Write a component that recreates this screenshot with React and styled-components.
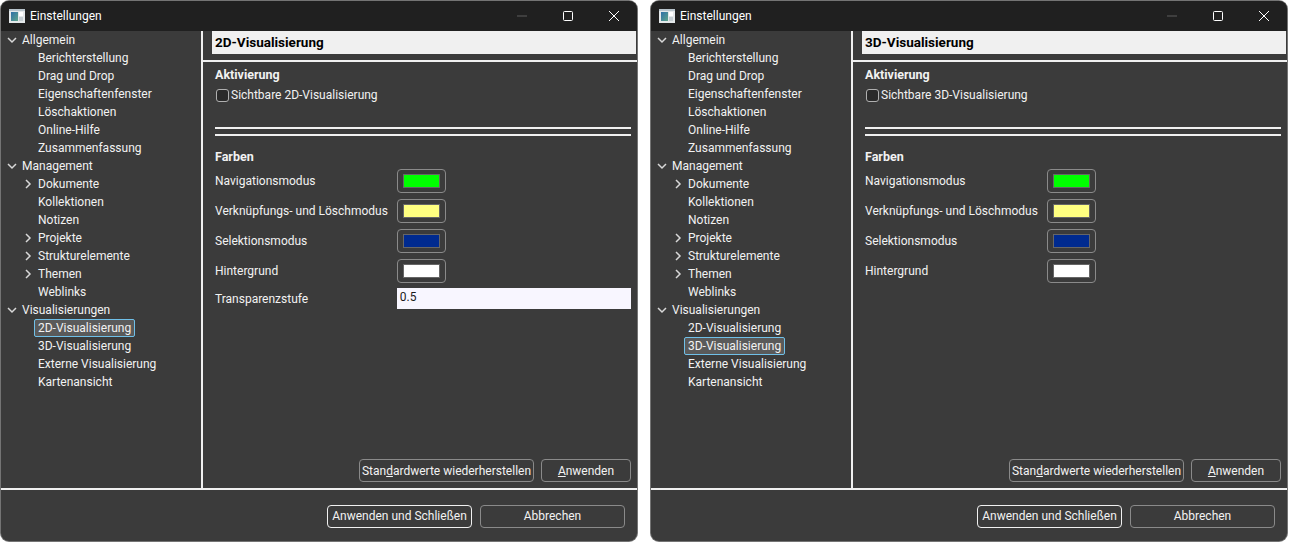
import React from "react";
import styled, { createGlobalStyle } from "styled-components";

const Global = createGlobalStyle`
  html, body {
    margin: 0;
    padding: 0;
    background: #fff;
  }
  body {
    font-family: "Roboto", "Noto Sans", sans-serif;
    font-size: 12px;
    color: #f2f2f2;
  }
`;

const Desktop = styled.div`
  display: flex;
  gap: 14px;
  padding: 1px 0 0 1px;
  width: 1300px;
  height: 542px;
  box-sizing: border-box;
  overflow: hidden;
`;

const Win = styled.div`
  width: 636px;
  height: 540px;
  display: flex;
  flex-direction: column;
  background: #3b3b3b;
  border-radius: 8px;
  overflow: hidden;
  box-shadow: 0 0 0 1px rgba(70, 70, 70, 0.75);
`;

const TitleBar = styled.div`
  height: 30px;
  box-sizing: border-box;
  flex: none;
  display: flex;
  align-items: center;
  background: #202020;
  padding: 0 0 1px 8px;
`;

const AppIcon = styled.svg`
  width: 16px;
  height: 14px;
  flex: none;
  margin-right: 5px;
`;

const TitleText = styled.span`
  flex: 1;
  color: #fff;
`;

const CaptionBtn = styled.div`
  width: 46px;
  height: 29px;
  display: flex;
  align-items: center;
  justify-content: center;
`;

const Body = styled.div`
  height: 457px;
  flex: none;
  display: flex;
  border-bottom: 2px solid #f0f0f0;
`;

const Nav = styled.div`
  width: 200px;
  flex: none;
  border-right: 2px solid #f0f0f0;
`;

const TreeRow = styled.div`
  height: 18px;
  display: flex;
  align-items: center;
  padding-left: ${(p) => (p.$depth ? 36 : 20)}px;
  position: relative;
  white-space: nowrap;
`;

const TreeLabel = styled.span`
  padding: 0 3px;
  margin-left: -3px;
  height: 16px;
  line-height: 15px;
  box-sizing: border-box;
  border: 1px solid transparent;
  border-radius: 2px;
  ${(p) =>
    p.$selected &&
    `
    background: #5a5a5a;
    border-color: #70c0e8;
    height: 18px;
    line-height: 16px;
  `}
`;

const Arrow = styled.svg`
  position: absolute;
  left: ${(p) => (p.$depth ? 22 : 6)}px;
  top: 4px;
  width: 10px;
  height: 10px;
`;

const Panel = styled.div`
  flex: 1;
  min-width: 0;
  display: flex;
  flex-direction: column;
`;

const Header = styled.div`
  margin: 0 1px 0 9px;
  height: 23px;
  flex: none;
  background: #f0f0f0;
  color: #000;
  font-weight: 700;
  font-size: 13.5px;
  line-height: 23px;
  padding-left: 3px;
`;

const HeaderRule = styled.div`
  height: 2px;
  margin-top: 6px;
  flex: none;
  background: #f0f0f0;
`;

const Content = styled.div`
  flex: 1;
  padding: 5px 6px 6px 12px;
  display: flex;
  flex-direction: column;
`;

const Heading = styled.div`
  font-weight: 700;
  font-size: 12.5px;
  line-height: 16px;
  height: 16px;
  margin-top: ${(p) => p.$top || 0}px;
`;

const CheckRow = styled.label`
  display: flex;
  align-items: center;
  gap: 2px;
  height: 18px;
  margin-top: 3px;
`;

const Check = styled.span`
  width: 13px;
  height: 13px;
  margin-left: 1px;
  box-sizing: border-box;
  background: #2a2a2a;
  border: 1px solid #b0b0b0;
  border-radius: 3px;
`;

const DoubleRule = styled.div`
  margin-top: 23px;
  height: 9px;
  box-sizing: border-box;
  border-top: 2px solid #f0f0f0;
  border-bottom: 2px solid #f0f0f0;
`;

const ColorGrid = styled.div`
  display: grid;
  grid-template-columns: max-content 1fr;
  grid-template-rows: repeat(4, 30px) 26px;
  column-gap: 9px;
  margin-top: 1px;
  align-items: center;
`;

const Swatch = styled.div`
  width: 49px;
  height: 24px;
  box-sizing: border-box;
  padding: 4px 5px;
  border: 1px solid #8a8a8a;
  border-radius: 4px;
  display: flex;

  &::after {
    content: "";
    flex: 1;
    box-sizing: border-box;
    border: 1px solid #666;
    background: ${(p) => p.$color};
  }
`;

const NumberInput = styled.div`
  align-self: start;
  margin-top: 2px;
  height: 21px;
  line-height: 18px;
  padding-left: 3px;
  background: #f8f6ff;
  color: #1a1a1a;
`;

const Actions = styled.div`
  margin-top: auto;
  display: flex;
  justify-content: flex-end;
  gap: 7px;
`;

const Button = styled.div`
  width: ${(p) => p.$width}px;
  height: 23px;
  box-sizing: border-box;
  display: flex;
  align-items: center;
  justify-content: center;
  white-space: nowrap;
  border: 1px solid ${(p) => (p.$primary ? "#f0f0f0" : "#8a8a8a")};
  border-radius: 4px;
`;

const Footer = styled.div`
  flex: 1;
  display: flex;
  justify-content: flex-end;
  align-items: center;
  gap: 8px;
  padding: 1px 12px 0 0;
`;

const tree = [
  { label: "Allgemein", open: true },
  { label: "Berichterstellung", depth: 1 },
  { label: "Drag und Drop", depth: 1 },
  { label: "Eigenschaftenfenster", depth: 1 },
  { label: "Löschaktionen", depth: 1 },
  { label: "Online-Hilfe", depth: 1 },
  { label: "Zusammenfassung", depth: 1 },
  { label: "Management", open: true },
  { label: "Dokumente", depth: 1, closed: true },
  { label: "Kollektionen", depth: 1 },
  { label: "Notizen", depth: 1 },
  { label: "Projekte", depth: 1, closed: true },
  { label: "Strukturelemente", depth: 1, closed: true },
  { label: "Themen", depth: 1, closed: true },
  { label: "Weblinks", depth: 1 },
  { label: "Visualisierungen", open: true },
  { label: "2D-Visualisierung", depth: 1 },
  { label: "3D-Visualisierung", depth: 1 },
  { label: "Externe Visualisierung", depth: 1 },
  { label: "Kartenansicht", depth: 1 },
];

const colors = [
  ["Navigationsmodus", "#00ff00"],
  ["Verknüpfungs- und Löschmodus", "#ffff80"],
  ["Selektionsmodus", "#002a8f"],
  ["Hintergrund", "#ffffff"],
];

const Window = ({ kind, transparency }) => {
  const name = `${kind}-Visualisierung`;
  return (
    <Win>
      <TitleBar>
        <AppIcon viewBox="0 0 16 14">
          <defs>
            <linearGradient id={`pane${kind}`} x1="0" y1="0" x2="1" y2="1">
              <stop offset="0" stopColor="#2f6fa8" />
              <stop offset="1" stopColor="#5fa58a" />
            </linearGradient>
          </defs>
          <rect x="0" y="0" width="16" height="14" fill="#e4e8ea" />
          <rect x="0" y="0" width="16" height="2" fill="#b8c4cc" />
          <rect x="2" y="3" width="7" height="9" fill={`url(#pane${kind})`} />
          <rect x="10" y="3" width="4" height="4" fill="#ffffff" />
          <rect x="10" y="8" width="4" height="4" fill="#c4cdd2" />
        </AppIcon>
        <TitleText>Einstellungen</TitleText>
        <CaptionBtn>
          <svg width="12" height="12" viewBox="0 0 12 12">
            <path d="M1 6h10" stroke="#5c5c5c" />
          </svg>
        </CaptionBtn>
        <CaptionBtn>
          <svg width="12" height="12" viewBox="0 0 12 12">
            <rect x="1.5" y="1.5" width="9" height="9" rx="1" fill="none" stroke="#fff" />
          </svg>
        </CaptionBtn>
        <CaptionBtn>
          <svg width="12" height="12" viewBox="0 0 12 12">
            <path d="M1 1l10 10M11 1L1 11" stroke="#fff" />
          </svg>
        </CaptionBtn>
      </TitleBar>
      <Body>
        <Nav>
          {tree.map((item) => (
            <TreeRow key={item.label} $depth={item.depth}>
              {item.open && (
                <Arrow viewBox="0 0 10 10">
                  <path d="M1 3l4 4 4-4" fill="none" stroke="#d8d8d8" strokeWidth="1.5" />
                </Arrow>
              )}
              {item.closed && (
                <Arrow $depth viewBox="0 0 10 10">
                  <path d="M3 1l4 4-4 4" fill="none" stroke="#d8d8d8" strokeWidth="1.5" />
                </Arrow>
              )}
              <TreeLabel $selected={item.label === name}>{item.label}</TreeLabel>
            </TreeRow>
          ))}
        </Nav>
        <Panel>
          <Header>{name}</Header>
          <HeaderRule />
          <Content>
            <Heading>Aktivierung</Heading>
            <CheckRow>
              <Check />
              Sichtbare {name}
            </CheckRow>
            <DoubleRule />
            <Heading $top={13}>Farben</Heading>
            <ColorGrid>
              {colors.map(([label, color]) => (
                <React.Fragment key={label}>
                  <span>{label}</span>
                  <Swatch $color={color} />
                </React.Fragment>
              ))}
              {transparency && (
                <>
                  <span>Transparenzstufe</span>
                  <NumberInput>0.5</NumberInput>
                </>
              )}
            </ColorGrid>
            <Actions>
              <Button $width={175}>
                <span>
                  Stan<u>d</u>ardwerte wiederherstellen
                </span>
              </Button>
              <Button $width={90}>
                <span>
                  <u>A</u>nwenden
                </span>
              </Button>
            </Actions>
          </Content>
        </Panel>
      </Body>
      <Footer>
        <Button $width={145} $primary>
          Anwenden und Schließen
        </Button>
        <Button $width={145}>Abbrechen</Button>
      </Footer>
    </Win>
  );
};

export default function App() {
  return (
    <>
      <Global />
      <Desktop>
        <Window kind="2D" transparency />
        <Window kind="3D" />
      </Desktop>
    </>
  );
}
